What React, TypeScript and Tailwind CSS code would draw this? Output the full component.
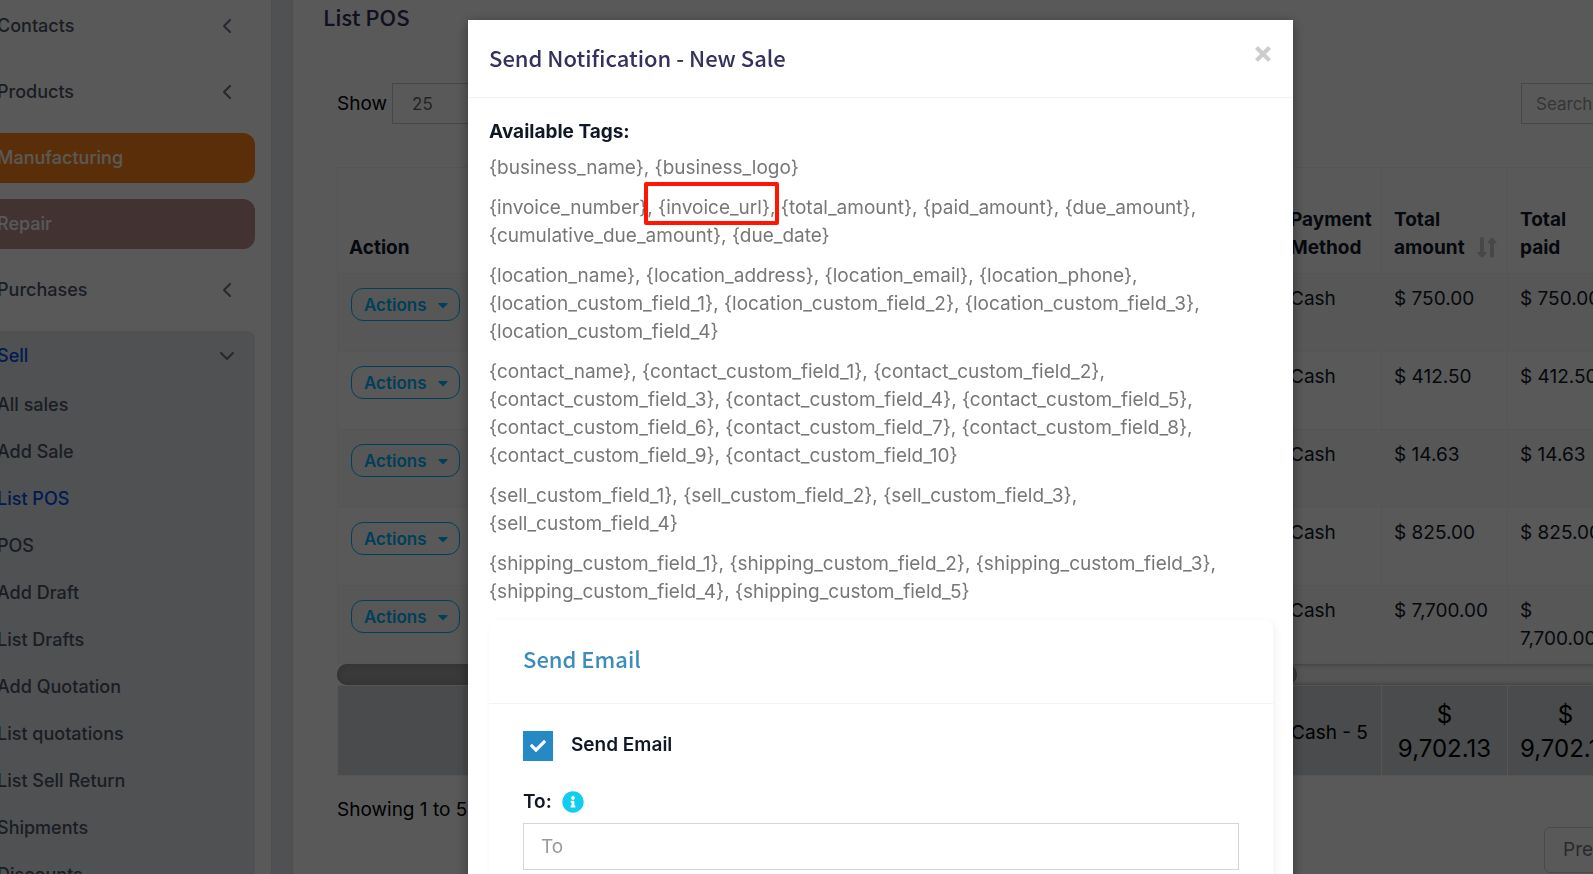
import { FaCaretDown, FaCheck, FaInfoCircle } from 'react-icons/fa';
import { ChevronDown, ChevronLeft } from 'lucide-react';

const saleLinks = [
  'All sales',
  'Add Sale',
  'List POS',
  'POS',
  'Add Draft',
  'List Drafts',
  'Add Quotation',
  'List quotations',
  'List Sell Return',
  'Shipments',
  'Discounts',
];

const amounts = ['$ 750.00', '$ 412.50', '$ 14.63', '$ 825.00', '$ 7,700.00'];

const headingFont = "font-['Source_Sans_Pro','Noto_Sans_CJK_JP',sans-serif]";

function MenuItem({ label, tone = '' }: { label: string; tone?: string }) {
  return (
    <a
      href="#"
      className={`mb-4 flex h-[50px] items-center justify-between rounded-r-xl pr-[18px] font-medium ${tone || 'text-gray-600'}`}
    >
      <span className="-ml-[3px]">{label}</span>
      {!tone && <ChevronLeft size={24} className="-mr-0.5 text-gray-500" />}
    </a>
  );
}

function Sidebar() {
  return (
    <nav className="w-[272px] shrink-0 border-r border-[#dcdfe3] bg-white pt-px pr-4 text-lg">
      <MenuItem label="Contacts" />
      <MenuItem label="Products" />
      <MenuItem label="Manufacturing" tone="bg-[#ff851b] text-white" />
      <MenuItem label="Repair" tone="bg-[#bc8f8f] text-white" />
      <MenuItem label="Purchases" />
      <div className="rounded-tr-lg bg-[#e5e8ea] pb-4">
        <a href="#" className="flex h-[50px] items-center justify-between pr-[18px] font-medium text-[#004eeb]">
          <span className="-ml-[3px]">Sell</span>
          <ChevronDown size={24} className="-mr-0.5 text-gray-500" />
        </a>
        <ul>
          {saleLinks.map((label) => (
            <li key={label}>
              <a
                href="#"
                className={`-ml-[3px] flex h-[47px] items-center font-medium ${label === 'List POS' ? 'text-[#004eeb]' : 'text-gray-600'}`}
              >
                {label}
              </a>
            </li>
          ))}
        </ul>
      </div>
    </nav>
  );
}

function SortIcon() {
  return (
    <svg width="20" height="21" viewBox="0 0 20 21" fill="currentColor" className="shrink-0 text-[#ccc]">
      <path d="M3 1.500a1.200 1.200 0 0 1 1.200-1.200h1.600a1.200 1.200 0 0 1 1.200 1.200V15h2.200q1 .2.500 1L6 20.200q-1 .8-2 0L.3 16q-.5-.8.500-1H3zM13 19.300V6.500h-2.200q-1-.2-.5-1L14 1q1-.8 2 0l3.700 4.500q.5.800-.5 1H17v12.800a1.200 1.200 0 0 1-1.200 1.200h-1.600a1.200 1.200 0 0 1-1.200-1.200z" />
    </svg>
  );
}

const cell = 'border border-[#f2f2f2] px-3';

function SalesTable() {
  return (
    <table className="w-full table-fixed border-collapse text-left text-gray-900">
      <colgroup>
        <col className="w-[136px]" />
        <col />
        <col className="w-[104px]" />
        <col className="w-[126px]" />
        <col className="w-[116px]" />
      </colgroup>
      <thead>
        <tr className="h-[106px] align-bottom">
          <th className={`${cell} pb-[11px] pl-[11px] font-bold`}>Action</th>
          <td className={cell} />
          <th className={`${cell} pb-[11px] font-bold`}>Payment Method</th>
          <th className={`${cell} pr-2.5 pb-[11px] font-bold`}>
            <span className="flex items-end justify-between">
              <span>
                Total
                <br />
                amount
              </span>
              <span className="pb-1">
                <SortIcon />
              </span>
            </span>
          </th>
          <th className={`${cell} pb-[11px] font-bold`}>
            Total
            <br />
            paid
          </th>
        </tr>
      </thead>
      <tbody>
        {amounts.map((amount) => (
          <tr key={amount} className="h-[78px] align-top odd:bg-[#f8f8f8]">
            <td className={`${cell} pt-[14px] pl-[13px]`}>
              <button className="flex h-[33px] w-[109px] items-center justify-between rounded-xl border border-[#00b5ff] pr-2 pl-3 text-[17px] font-semibold text-[#00b5ff]">
                Actions
                <FaCaretDown size={16} />
              </button>
            </td>
            <td className={cell} />
            <td className={`${cell} pt-[11px]`}>Cash</td>
            <td className={`${cell} pt-[11px] whitespace-nowrap`}>{amount}</td>
            <td className={`${cell} pt-[11px]`}>{amount}</td>
          </tr>
        ))}
      </tbody>
    </table>
  );
}

function TotalsTable() {
  return (
    <table className="w-full table-fixed border-collapse bg-[#d2d6da] text-black">
      <colgroup>
        <col />
        <col className="w-[104px]" />
        <col className="w-[126px]" />
        <col className="w-[116px]" />
      </colgroup>
      <tbody>
        <tr className="h-[90px] text-center text-2xl leading-[34px]">
          <td className="border border-[#f2f2f2]" />
          <td className="border border-[#f2f2f2] pt-1 text-[19px] whitespace-nowrap">Cash - 5</td>
          <td className="border border-[#f2f2f2] px-3 pt-0.5">$ 9,702.13</td>
          <td className="border border-[#f2f2f2] px-3 pt-0.5">$ 9,702.13</td>
        </tr>
      </tbody>
    </table>
  );
}

function PosPage() {
  return (
    <main className="ml-5 min-w-0 flex-1 border-l border-[#dcdfe3] bg-white pr-4 pl-[30px]">
      <h1 className={`text-[22px] leading-8 font-medium text-[#32305c] ${headingFont}`}>List POS</h1>
      <div className="mt-[51px] ml-3.5">
        <div className="flex items-center justify-between">
          <label className="flex items-center gap-[5px] text-black">
            Show
            <select defaultValue="25" className="h-[41px] w-[104px] appearance-none border border-[#c6cad2] pl-[19px] text-[17px] text-[#666]">
              <option>25</option>
            </select>
          </label>
          <input
            aria-label="Search"
            placeholder="Search ..."
            className="h-[41px] w-[103px] border border-[#c6cad2] pl-3.5 text-[17px] placeholder:text-[#999]"
          />
        </div>
        <div className="mt-[43px]">
          <SalesTable />
          <div className="h-[21px] rounded-full bg-[#f4f4f4] shadow-[inset_0_0_5px_#999]">
            <div className="h-full w-[960px] rounded-full bg-[#a3a3a3] shadow-[inset_0_0_6px_#888]" />
          </div>
          <TotalsTable />
        </div>
        <p className="mt-5 text-black">Showing 1 to 5 of 5 entries</p>
        <div className="mt-[3px] flex justify-end">
          <button className="h-[46px] w-[80px] overflow-hidden rounded-md border border-[#d0d0d0] pl-[18px] text-left text-[#777]">Previous</button>
        </div>
      </div>
    </main>
  );
}

function Modal() {
  return (
    <div className="fixed inset-0 flex items-start justify-center overflow-hidden bg-black/65 pt-5 pl-[168px]">
      <section role="dialog" aria-labelledby="dialog-title" className="min-h-screen w-[825px] bg-white shadow-[0_3px_12px_rgba(0,0,0,0.4)]">
        <header className="flex h-[78px] items-start justify-between border-b border-[#f2f3f4] pt-5 pr-[22px] pl-[21px]">
          <h2 id="dialog-title" className={`text-[22px] leading-[34px] font-medium text-[#35315f] ${headingFont}`}>
            Send Notification - New Sale
          </h2>
          <button aria-label="Close" className="mt-1.5 text-[#ccc]">
            <svg width="16" height="16" viewBox="0 0 16 16" stroke="currentColor" strokeWidth="4">
              <path d="M1.500 1.500 14.500 14.500M14.500 1.500 1.500 14.500" />
            </svg>
          </button>
        </header>
        <div className="px-[21px] pt-5">
          <h3 className="mb-2 font-bold text-gray-900">Available Tags:</h3>
          <div className="flex flex-col gap-3 pr-2 text-[#777]">
            <p>{'{business_name}, {business_logo}'}</p>
            <p>
              {'{invoice_number}, '}
              <span className="relative">
                {'{invoice_url},'}
                <span className="absolute -top-3.5 -right-1 -bottom-1.5 -left-3.5 rounded-xs border-4 border-[#ff1500]" />
              </span>
              {' {total_amount}, {paid_amount}, {due_amount}, {cumulative_due_amount}, {due_date}'}
            </p>
            <p>
              {'{location_name}, {location_address}, {location_email}, {location_phone}, {location_custom_field_1}, {location_custom_field_2}, {location_custom_field_3}, {location_custom_field_4}'}
            </p>
            <p>
              {'{contact_name}, {contact_custom_field_1}, {contact_custom_field_2}, {contact_custom_field_3}, {contact_custom_field_4}, {contact_custom_field_5}, {contact_custom_field_6}, {contact_custom_field_7}, {contact_custom_field_8}, {contact_custom_field_9}, {contact_custom_field_10}'}
            </p>
            <p>{'{sell_custom_field_1}, {sell_custom_field_2}, {sell_custom_field_3}, {sell_custom_field_4}'}</p>
            <p>
              {'{shipping_custom_field_1}, {shipping_custom_field_2}, {shipping_custom_field_3}, {shipping_custom_field_4}, {shipping_custom_field_5}'}
            </p>
          </div>
          <div className="mt-3.5 -mr-px h-[500px] rounded-lg shadow-[3px_3px_8px_rgba(30,50,80,0.06)]">
            <h4 className={`h-[84px] border-b border-[#f2f3f4] px-[34px] pt-[21px] text-[22px] leading-[34px] font-medium text-[#3c8dbc] ${headingFont}`}>
              Send Email
            </h4>
            <div className="px-[34px] pt-[27px]">
              <label className="flex items-start gap-[18px] font-semibold text-gray-900">
                <span className="grid size-[30px]">
                  <input type="checkbox" defaultChecked className="col-start-1 row-start-1 appearance-none bg-[#2489c5]" />
                  <FaCheck size={16} className="pointer-events-none col-start-1 row-start-1 place-self-center text-white" />
                </span>
                Send Email
              </label>
              <div className="mt-[27px] flex items-center gap-2.5">
                <label htmlFor="to" className="font-semibold text-gray-900">
                  To:
                </label>
                <FaInfoCircle size={22} className="text-[#11cdef]" />
              </div>
              <input id="to" placeholder="To" className="mt-[7px] h-[47px] w-full border border-[#d2d6de] px-[17px] placeholder:text-[#999]" />
            </div>
          </div>
        </div>
      </section>
    </div>
  );
}

export default function App() {
  return (
    <div className="h-screen overflow-hidden bg-[#e4e7ec] font-['Inter',sans-serif] text-[19px] leading-7">
      <div className="flex min-h-full w-[calc(100%+47px)]">
        <Sidebar />
        <PosPage />
      </div>
      <Modal />
    </div>
  );
}
